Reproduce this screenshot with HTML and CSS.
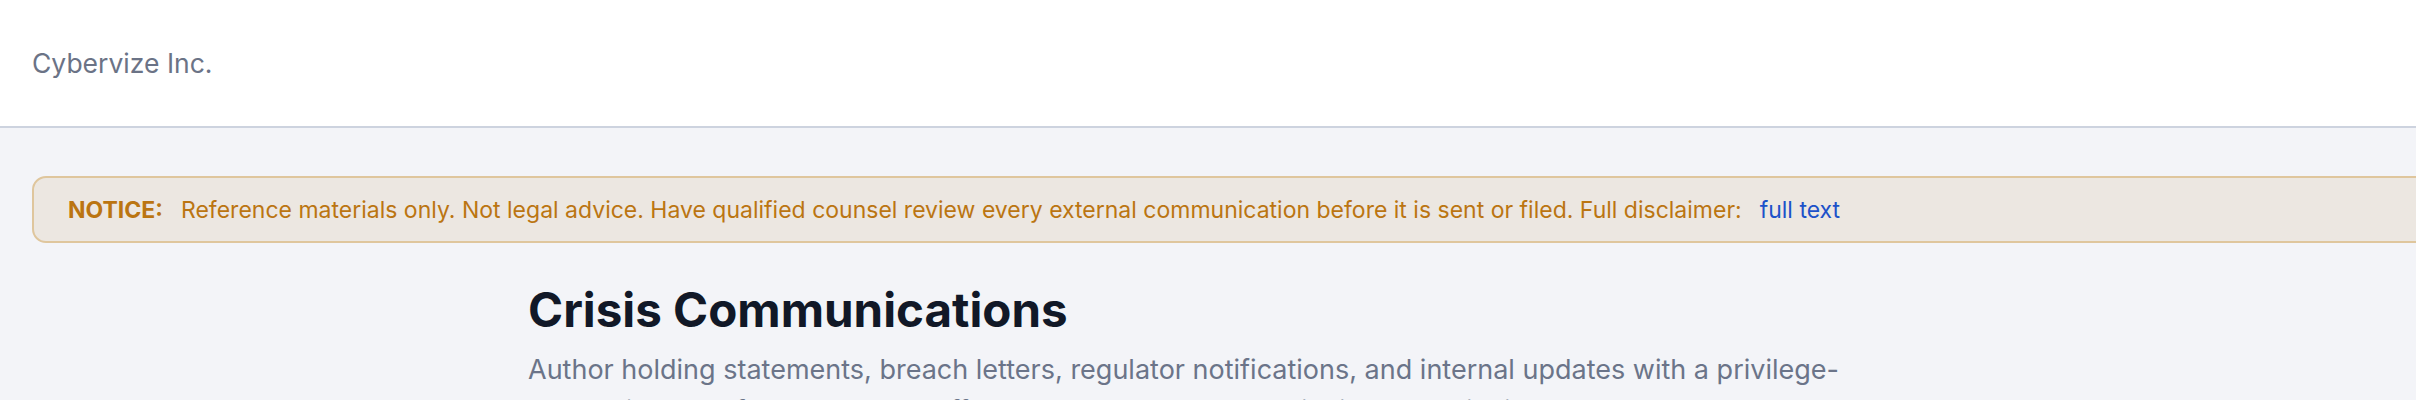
FILE: index.html
```html
<!DOCTYPE html>
<html lang="en">
<head>
    <meta charset="UTF-8">
    <meta name="viewport" content="width=device-width, initial-scale=1.0">
    <title>Crisis Communications - Cybervize Inc.</title>
    <link rel="stylesheet" href="styles.css">
</head>
<body>
    <header class="topbar">
        <span class="brand">Cybervize Inc.</span>
    </header>
    <main class="page">
        <div class="notice">
            <strong class="notice-label">NOTICE:</strong>
            <span class="notice-text">Reference materials only. Not legal advice. Have qualified counsel review every external communication before it is sent or filed. Full disclaimer:</span>
            <a class="notice-link" href="#disclaimer">full text</a>
        </div>
        <section class="content">
            <h1>Crisis Communications</h1>
            <p class="lead">Author holding statements, breach letters, regulator notifications, and internal updates with a privilege-preserving workflow. Examples offered cover a ransomware incident, the incident log and the IR-SOC documents.</p>
        </section>
    </main>
</body>
</html>
```

FILE: styles.css
```css
body {
    margin: 0;
    padding: 0;
    font-family: 'Inter', 'Noto Sans', sans-serif;
    background: #f3f4f8;
    overflow-x: hidden;
}
.topbar {
    height: 126px;
    background: #fff;
    border-bottom: 2px solid #cdd3df;
    display: flex;
    align-items: center;
    padding: 0 32px;
}
.brand {
    font-size: 26.5px;
    color: #6b7386;
}
.page {
    padding-top: 48px;
}
.notice {
    margin-left: 32px;
    width: 100%;
    box-sizing: border-box;
    height: 67px;
    display: flex;
    align-items: center;
    padding: 0 34px;
    background: #ece7e1;
    border: 2px solid #dfc69d;
    border-radius: 14px;
    font-size: 23px;
    color: #bb7511;
    white-space: nowrap;
}
.notice-label {
    font-weight: 700;
    margin-right: 18px;
}
.notice-link {
    color: #1d52c9;
    text-decoration: none;
    margin-left: 18px;
}
.content {
    max-width: 1360px;
    margin: 0 auto;
    padding-top: 38px;
}
h1 {
    margin: 0;
    font-size: 47.5px;
    line-height: 1.2;
    font-weight: 700;
    color: #111827;
}
.lead {
    margin: 12px 0 0;
    font-size: 27px;
    line-height: 1.5;
    color: #6b7489;
}
```
